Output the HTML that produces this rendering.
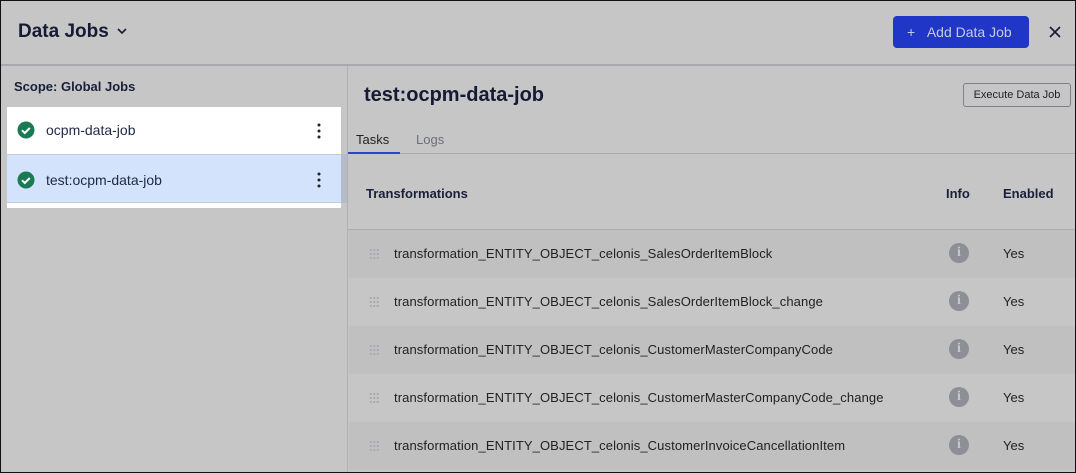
<!DOCTYPE html>
<html><head><style>
*{box-sizing:border-box;margin:0;padding:0}
body{width:1076px;height:473px;overflow:hidden;background:#c6c6c6;font-family:"Liberation Sans",sans-serif;color:#18203a;position:relative}
.frame{position:absolute;left:0;top:0;width:1076px;height:473px;border:1px solid #111;}
.abs{position:absolute}
.row{position:absolute;left:349px;width:726px;height:48px}
.row .dots{position:absolute;left:20px;top:18px;width:10px;height:12px;background-image:radial-gradient(circle,#a8aab0 1px,transparent 1.2px);background-size:3.5px 4px}
.row .t{position:absolute;left:45px;top:16px;font-size:13px;color:#222;letter-spacing:0.1px}
.row .i{position:absolute;left:600px;top:13px;width:20px;height:20px;border-radius:50%;background:#8c8f96;color:#c6c6c6;font:bold 14px "Liberation Serif",serif;text-align:center;line-height:20px}
.row .y{position:absolute;left:654px;top:16px;font-size:13px;color:#222}
</style></head><body>
<div class="abs" style="left:18px;top:21px;font-size:19px;font-weight:bold;color:#141b33">Data Jobs</div>
<svg class="abs" style="left:116px;top:27px" width="12" height="8"><path d="M2 2l4 4 4-4" fill="none" stroke="#141b33" stroke-width="1.6"/></svg>
<div class="abs" style="left:893px;top:16px;width:136px;height:32px;background:#1f36c6;border-radius:4px;color:#c8cbe0;font-size:14px;line-height:32px;padding-left:14px">+&nbsp;&nbsp;&nbsp;Add Data Job</div>
<svg class="abs" style="left:1048px;top:25px" width="14" height="14"><path d="M2 2l10 10M12 2L2 12" stroke="#141b33" stroke-width="1.6"/></svg>
<div class="abs" style="left:0;top:64px;width:1076px;height:2px;background:#a9aab0"></div>
<div class="abs" style="left:347px;top:66px;width:1px;height:407px;background:#b0b1b6"></div>
<div class="abs" style="left:14px;top:79px;font-size:13px;font-weight:bold">Scope: Global Jobs</div>
<div class="abs" style="left:7px;top:107px;width:334px;height:101px;background:#fff"></div>
<div class="abs" style="left:7px;top:154px;width:334px;height:49px;background:#d3e3fb;border-top:1px solid #c5cad6;border-bottom:1px solid #c5cad6"></div>
<div class="abs" style="left:341px;top:154px;width:6px;height:49px;background:#b5bcc8"></div>
<svg class="abs" style="left:17px;top:121px" width="18" height="18"><circle cx="9" cy="9" r="8.5" fill="#1a7a52"/><path d="M5 9.3l2.8 2.7 5-5" fill="none" stroke="#fff" stroke-width="2"/></svg>
<svg class="abs" style="left:17px;top:171px" width="18" height="18"><circle cx="9" cy="9" r="8.5" fill="#1a7a52"/><path d="M5 9.3l2.8 2.7 5-5" fill="none" stroke="#fff" stroke-width="2"/></svg>
<div class="abs" style="left:46px;top:122px;font-size:14px;color:#222b45">ocpm-data-job</div>
<div class="abs" style="left:46px;top:172px;font-size:14px;color:#222b45">test:ocpm-data-job</div>
<svg class="abs" style="left:316px;top:123px" width="6" height="16"><circle cx="3" cy="2" r="1.5" fill="#222"/><circle cx="3" cy="8" r="1.5" fill="#222"/><circle cx="3" cy="14" r="1.5" fill="#222"/></svg>
<svg class="abs" style="left:316px;top:172px" width="6" height="16"><circle cx="3" cy="2" r="1.5" fill="#222"/><circle cx="3" cy="8" r="1.5" fill="#222"/><circle cx="3" cy="14" r="1.5" fill="#222"/></svg>
<div class="abs" style="left:364px;top:84px;font-size:20px;font-weight:bold;color:#141b33">test:ocpm-data-job</div>
<div class="abs" style="left:963px;top:83px;width:108px;height:24px;border:1px solid #7d7f86;border-radius:3px;font-size:11px;line-height:22px;text-align:center;color:#222">Execute Data Job</div>
<div class="abs" style="left:356px;top:132px;font-size:13px;color:#222">Tasks</div>
<div class="abs" style="left:416px;top:132px;font-size:13px;color:#6b6e78">Logs</div>
<div class="abs" style="left:348px;top:153px;width:728px;height:1px;background:#aaacb2"></div>
<div class="abs" style="left:348px;top:152px;width:52px;height:2px;background:#2a45c8"></div>
<div class="abs" style="left:366px;top:186px;font-size:13px;font-weight:bold">Transformations</div>
<div class="abs" style="left:946px;top:186px;font-size:13px;font-weight:bold">Info</div>
<div class="abs" style="left:1003px;top:186px;font-size:13px;font-weight:bold">Enabled</div>
<div class="abs" style="left:348px;top:229px;width:728px;height:1px;background:#aaacb2"></div>
<div class="row" style="top:230px;background:#c0c0c1"><div class="dots"></div><div class="t">transformation_ENTITY_OBJECT_celonis_SalesOrderItemBlock</div><div class="i">i</div><div class="y">Yes</div></div>
<div class="row" style="top:278px"><div class="dots"></div><div class="t">transformation_ENTITY_OBJECT_celonis_SalesOrderItemBlock_change</div><div class="i">i</div><div class="y">Yes</div></div>
<div class="row" style="top:326px;background:#c0c0c1"><div class="dots"></div><div class="t">transformation_ENTITY_OBJECT_celonis_CustomerMasterCompanyCode</div><div class="i">i</div><div class="y">Yes</div></div>
<div class="row" style="top:374px"><div class="dots"></div><div class="t">transformation_ENTITY_OBJECT_celonis_CustomerMasterCompanyCode_change</div><div class="i">i</div><div class="y">Yes</div></div>
<div class="row" style="top:422px;background:#c0c0c1"><div class="dots"></div><div class="t">transformation_ENTITY_OBJECT_celonis_CustomerInvoiceCancellationItem</div><div class="i">i</div><div class="y">Yes</div></div>
<div class="frame"></div>
</body></html>
